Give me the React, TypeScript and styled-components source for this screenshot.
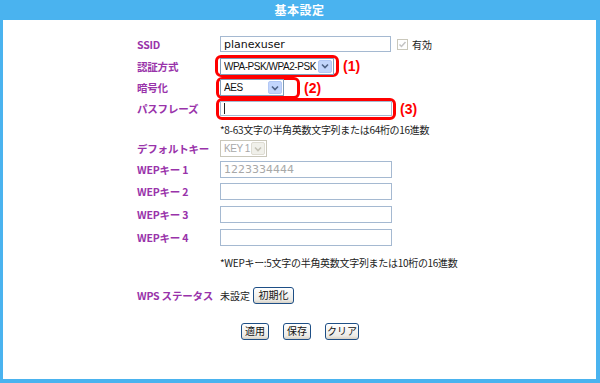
import React from "react";
import styled, { createGlobalStyle } from "styled-components";

const Global = createGlobalStyle`
  html, body { margin: 0; padding: 0; background: #4ab3ef; }
  body { font-family: "Noto Sans CJK JP", "DejaVu Sans", sans-serif; }
`;

const Frame = styled.div`
  width: 600px;
  height: 383px;
  background: #4ab3ef;
  display: flex;
  flex-direction: column;
  box-sizing: border-box;
  padding: 0 4px 4px 3px;
`;

const Title = styled.div`
  height: 20px;
  line-height: 20px;
  text-align: center;
  color: #fff;
  font-weight: bold;
  font-size: 12px;
  letter-spacing: 0.5px;
`;

const Panel = styled.div`
  flex: 1;
  background: #fff;
  padding: 13px 0 0 134px;
  display: flex;
  flex-direction: column;
`;

const Row = styled.div<{ $h: number }>`
  height: ${(p) => p.$h}px;
  display: flex;
  align-items: center;
`;

const Label = styled.div`
  width: 83px;
  flex: none;
  color: #9933aa;
  font-weight: bold;
  font-size: 10.5px;
  letter-spacing: -0.2px;
  white-space: nowrap;
`;

const Note = styled.div`
  margin-left: 83px;
  font-size: 10px;
  color: #222;
  letter-spacing: -0.3px;
  white-space: nowrap;
`;

const TextInput = styled.div<{ $w: number; $h?: number; $disabled?: boolean }>`
  width: ${(p) => p.$w}px;
  height: ${(p) => p.$h ?? 17}px;
  box-sizing: border-box;
  border: 1px solid #a5b9d1;
  background: #fff;
  font-family: "DejaVu Sans", sans-serif;
  font-size: 11px;
  color: ${(p) => (p.$disabled ? "#a8a8a8" : "#111")};
  display: flex;
  align-items: center;
  padding-left: 3px;
  white-space: nowrap;
`;

const Caret = styled.span`
  width: 1px;
  height: 11px;
  background: #222;
`;

const SelectBox = styled.div<{ $w: number; $disabled?: boolean }>`
  width: ${(p) => p.$w}px;
  height: 17px;
  flex: none;
  box-sizing: border-box;
  border: 1px solid ${(p) => (p.$disabled ? "#c9c7ba" : "#7f9db9")};
  background: #fff;
  display: flex;
  align-items: center;
  padding: 0 1px 0 3px;
  font-family: "Liberation Sans", Arial, sans-serif;
  font-size: 10px;
  letter-spacing: -0.45px;
  white-space: nowrap;
  color: ${(p) => (p.$disabled ? "#a8a8a8" : "#111")};
`;

const SelectText = styled.span`
  flex: 1;
  min-width: 0;
  overflow: hidden;
`;

const ArrowBtn = styled.div<{ $disabled?: boolean }>`
  width: 14px;
  height: 13px;
  flex: none;
  border-radius: 2px;
  background: ${(p) => (p.$disabled ? "#f0f0ea" : "#c2d5fc")};
  border: 1px solid ${(p) => (p.$disabled ? "#dedcd2" : "#b3c8f5")};
  box-sizing: border-box;
  display: flex;
  align-items: center;
  justify-content: center;
`;

const Highlight = styled.div<{ $pr: number; $pl: number }>`
  display: inline-flex;
  align-items: center;
  border: 3px solid #ff0000;
  border-radius: 6px;
  padding: 0 ${(p) => p.$pr}px 0 ${(p) => p.$pl}px;
  margin-left: ${(p) => -(p.$pl + 3)}px;
  height: 16px;
`;

const Marker = styled.span`
  color: #ff0000;
  font-family: "Liberation Sans", Arial, sans-serif;
  font-weight: bold;
  font-size: 14px;
  margin-left: 4px;
`;

const Check = styled.span`
  width: 11px;
  height: 11px;
  box-sizing: border-box;
  border: 1px solid #cac8bb;
  margin-left: 6px;
  display: inline-flex;
  align-items: center;
  justify-content: center;
`;

const CheckText = styled.span`
  font-size: 10px;
  margin-left: 4px;
  color: #222;
`;

const Plain = styled.span`
  font-size: 10px;
  color: #222;
`;

const Button = styled.button<{ $w: number }>`
  width: ${(p) => p.$w}px;
  height: 17px;
  padding: 0;
  border: 1px solid #1e4f86;
  border-radius: 3px;
  background: linear-gradient(#ffffff, #ecebe6 80%, #d6d0c5);
  font-family: "Noto Sans CJK JP", sans-serif;
  font-size: 10px;
  color: #111;
  line-height: 14px;
`;

const WpsButton = styled(Button)`
  margin-left: 3px;
`;

const ButtonBar = styled.div`
  display: flex;
  gap: 14px;
  padding-left: 104px;
  align-items: center;
`;

const Chevron = ({ color }: { color: string }) => (
  <svg width="8" height="6" viewBox="0 0 8 6">
    <path d="M1 1.5 L4 4.5 L7 1.5" stroke={color} strokeWidth="1.6" fill="none" />
  </svg>
);

const Select = ({ w, value, disabled }: { w: number; value: string; disabled?: boolean }) => (
  <SelectBox $w={w} $disabled={disabled}>
    <SelectText>{value}</SelectText>
    <ArrowBtn $disabled={disabled}>
      <Chevron color={disabled ? "#c4c2b6" : "#4d6185"} />
    </ArrowBtn>
  </SelectBox>
);

export default function App() {
  return (
    <>
      <Global />
      <Frame>
        <Title>基本設定</Title>
        <Panel>
          <Row $h={22}>
            <Label>SSID</Label>
            <TextInput $w={171} $h={16}>planexuser</TextInput>
            <Check>
              <svg width="9" height="9" viewBox="0 0 9 9">
                <path d="M1.5 4.5 L3.5 6.5 L7.5 2" stroke="#c4c4c4" strokeWidth="1.5" fill="none" />
              </svg>
            </Check>
            <CheckText>有効</CheckText>
          </Row>
          <Row $h={22}>
            <Label>認証方式</Label>
            <Highlight $pl={2} $pr={2}>
              <Select w={114} value="WPA-PSK/WPA2-PSK" />
            </Highlight>
            <Marker>(1)</Marker>
          </Row>
          <Row $h={21}>
            <Label>暗号化</Label>
            <Highlight $pl={1} $pr={13}>
              <Select w={64} value="AES" />
            </Highlight>
            <Marker>(2)</Marker>
          </Row>
          <Row $h={21}>
            <Label>パスフレーズ</Label>
            <Highlight $pl={1} $pr={1}>
              <TextInput $w={172} $h={15}>
                <Caret />
              </TextInput>
            </Highlight>
            <Marker>(3)</Marker>
          </Row>
          <Row $h={20}>
            <Note>*8-63文字の半角英数文字列または64桁の16進数</Note>
          </Row>
          <Row $h={19}>
            <Label>デフォルトキー</Label>
            <Select w={47} value="KEY 1" disabled />
          </Row>
          <Row $h={22}>
            <Label>WEPキー 1</Label>
            <TextInput $w={172} $disabled>1223334444</TextInput>
          </Row>
          <Row $h={23}>
            <Label>WEPキー 2</Label>
            <TextInput $w={172} />
          </Row>
          <Row $h={23}>
            <Label>WEPキー 3</Label>
            <TextInput $w={172} />
          </Row>
          <Row $h={22}>
            <Label>WEPキー 4</Label>
            <TextInput $w={172} />
          </Row>
          <Row $h={29}>
            <Note>*WEPキー:5文字の半角英数文字列または10桁の16進数</Note>
          </Row>
          <Row $h={36}>
            <Label>WPS ステータス</Label>
            <Plain>未設定</Plain>
            <WpsButton $w={41}>初期化</WpsButton>
          </Row>
          <Row $h={36}>
            <ButtonBar>
              <Button $w={28}>適用</Button>
              <Button $w={28}>保存</Button>
              <Button $w={34}>クリア</Button>
            </ButtonBar>
          </Row>
        </Panel>
      </Frame>
    </>
  );
}
